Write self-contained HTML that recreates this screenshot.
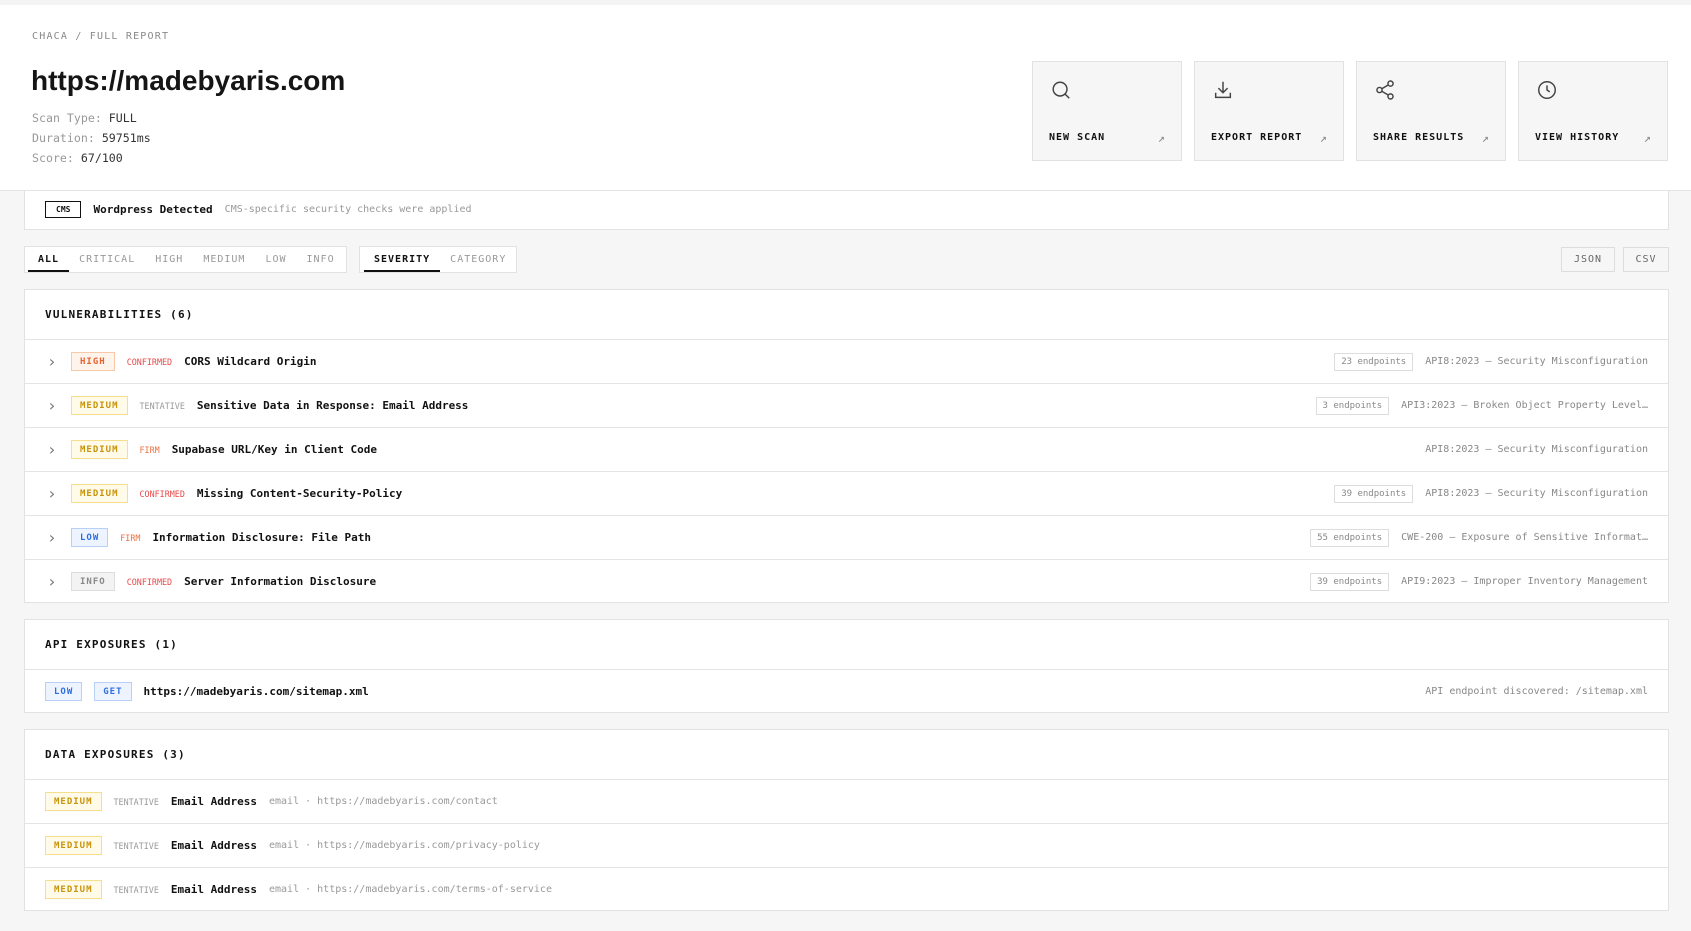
<!DOCTYPE html><html><head><meta charset="utf-8"><style>
*{box-sizing:border-box;margin:0;padding:0}
body{width:1691px;height:931px;background:#f6f6f6;font-family:"DejaVu Sans Mono","Liberation Mono",monospace;color:#111;overflow:hidden;position:relative}
.hdr{position:absolute;top:5px;left:0;width:1691px;height:186px;background:#fff;border-bottom:1px solid #e4e4e4}
.bc{position:absolute;left:32px;top:26px;font-size:10px;letter-spacing:1.2px;color:#888}
h1{position:absolute;left:31px;top:60px;font:bold 28px "Liberation Sans",sans-serif;color:#151515}
.meta{position:absolute;left:32px;top:103px;font-size:11.6px;line-height:20px;color:#999}
.meta b{font-weight:normal;color:#333}
.btn{position:absolute;top:56px;width:150px;height:100px;background:#f6f6f6;border:1px solid #e2e2e2}
.btn svg{position:absolute;left:17px;top:17px}
.btn span{position:absolute;left:16px;top:70px;font-size:10px;font-weight:bold;letter-spacing:1px}
.btn i{position:absolute;right:16px;top:69px;font-style:normal;font-size:12px;color:#888}
.card{position:absolute;left:24px;width:1645px;background:#fff;border:1px solid #e2e2e2}
.cms{top:191px;height:39px;border-top:none}
.tag{display:inline-block;border:1px solid #111;font-size:8px;font-weight:bold;padding:3px 10px}
.row{height:44px;border-top:1px solid #e4e4e4;display:flex;align-items:center;padding:0 20px;position:relative;font-size:11px}
.ch{height:49px;display:flex;align-items:center;padding-left:20px;font-size:11px;font-weight:bold;letter-spacing:1.2px}
.b{display:inline-block;height:19px;line-height:18px;font-size:9px;font-weight:bold;letter-spacing:1px;padding:0 8px;border:1px solid;margin-right:12px}
.hi{color:#e8612c;background:#fff4ec;border-color:#f7c9a8}
.me{color:#c8920a;background:#fffbe8;border-color:#f5df8a}
.lo{color:#2e6ee0;background:#eef4ff;border-color:#b9d0f5}
.in{color:#888;background:#f3f3f3;border-color:#ddd}
.cf{font-size:8.4px;margin-right:12px}
.cfr{color:#e84a4a}.tt{color:#999}.fm{color:#ee7040}
.t{font-weight:bold}
.chev{width:14px;margin-right:10px;margin-left:2px;color:#777;font-size:16px;line-height:16px}
.r{position:absolute;right:20px;display:flex;align-items:center;color:#888;font-size:10px}
.ep{border:1px solid #ddd;font-size:9px;padding:3px 6px;margin-right:12px;color:#888}
.tabs{position:absolute;top:246px;height:27px;background:#fff;border:1px solid #e2e2e2;display:flex;font-size:10px;letter-spacing:1px;color:#999}
.tabs span{padding:0 10px;line-height:24px;height:24px;margin-top:1px}
.tabs .a{color:#111;font-weight:bold;border-bottom:2px solid #111}
.x{position:absolute;top:247px;height:25px;border:1px solid #ddd;font-size:10px;color:#666;letter-spacing:1px;line-height:23px;text-align:center;background:#f6f6f6}
.g{color:#999;margin-left:12px;font-size:10px}
</style></head><body>
<div style="position:absolute;top:0;left:0;width:1691px;height:5px;background:#f4f4f4"></div>
<div class="hdr">
<div class="bc">CHACA / FULL REPORT</div>
<h1>https://madebyaris.com</h1>
<div class="meta">Scan Type: <b>FULL</b><br>Duration: <b>59751ms</b><br>Score: <b>67/100</b></div>
<div class="btn" style="left:1032px"><svg width="22" height="22" viewBox="0 0 24 24" fill="none" stroke="#444" stroke-width="1.6"><circle cx="11" cy="11" r="7.5"/><path d="M16.5 16.5L21 21"/></svg><span>NEW SCAN</span><i>↗</i></div>
<div class="btn" style="left:1194px"><svg width="22" height="22" viewBox="0 0 24 24" fill="none" stroke="#444" stroke-width="1.6"><path d="M12 3v12M7 10l5 5 5-5M4 15v5h16v-5"/></svg><span>EXPORT REPORT</span><i>↗</i></div>
<div class="btn" style="left:1356px"><svg width="22" height="22" viewBox="0 0 24 24" fill="none" stroke="#444" stroke-width="1.6"><circle cx="18" cy="5" r="2.8"/><circle cx="6" cy="12" r="2.8"/><circle cx="18" cy="19" r="2.8"/><path d="M8.5 10.7l7-4.2M8.5 13.3l7 4.2"/></svg><span>SHARE RESULTS</span><i>↗</i></div>
<div class="btn" style="left:1518px"><svg width="22" height="22" viewBox="0 0 24 24" fill="none" stroke="#444" stroke-width="1.6"><circle cx="12" cy="12" r="9"/><path d="M12 7v5l3 2"/></svg><span>VIEW HISTORY</span><i>↗</i></div>
</div>
<div class="card cms"><div style="display:flex;align-items:center;height:36px;padding-left:20px;font-size:11px"><span class="tag">CMS</span><span class="t" style="margin-left:12px">Wordpress Detected</span><span class="g">CMS-specific security checks were applied</span></div></div>
<div class="tabs" style="left:24px;width:323px"><span class="a" style="margin-left:3px">ALL</span><span>CRITICAL</span><span>HIGH</span><span>MEDIUM</span><span>LOW</span><span>INFO</span></div>
<div class="tabs" style="left:359px;width:158px"><span class="a" style="margin-left:4px">SEVERITY</span><span>CATEGORY</span></div>
<div class="x" style="left:1561px;width:54px">JSON</div>
<div class="x" style="left:1623px;width:46px">CSV</div>

<div class="card" style="top:289px;height:314px">
<div class="ch">VULNERABILITIES (6)</div>
<div class="row"><span class="chev">›</span><span class="b hi">HIGH</span><span class="cf cfr">CONFIRMED</span><span class="t">CORS Wildcard Origin</span><div class="r"><span class="ep">23 endpoints</span>API8:2023 – Security Misconfiguration</div></div>
<div class="row"><span class="chev">›</span><span class="b me">MEDIUM</span><span class="cf tt">TENTATIVE</span><span class="t">Sensitive Data in Response: Email Address</span><div class="r"><span class="ep">3 endpoints</span>API3:2023 – Broken Object Property Level…</div></div>
<div class="row"><span class="chev">›</span><span class="b me">MEDIUM</span><span class="cf fm">FIRM</span><span class="t">Supabase URL/Key in Client Code</span><div class="r">API8:2023 – Security Misconfiguration</div></div>
<div class="row"><span class="chev">›</span><span class="b me">MEDIUM</span><span class="cf cfr">CONFIRMED</span><span class="t">Missing Content-Security-Policy</span><div class="r"><span class="ep">39 endpoints</span>API8:2023 – Security Misconfiguration</div></div>
<div class="row"><span class="chev">›</span><span class="b lo">LOW</span><span class="cf fm">FIRM</span><span class="t">Information Disclosure: File Path</span><div class="r"><span class="ep">55 endpoints</span>CWE-200 – Exposure of Sensitive Informat…</div></div>
<div class="row"><span class="chev">›</span><span class="b in">INFO</span><span class="cf cfr">CONFIRMED</span><span class="t">Server Information Disclosure</span><div class="r"><span class="ep">39 endpoints</span>API9:2023 – Improper Inventory Management</div></div>
</div>

<div class="card" style="top:619px;height:94px">
<div class="ch">API EXPOSURES (1)</div>
<div class="row"><span class="b lo">LOW</span><span class="b lo">GET</span><span class="t">https://madebyaris.com/sitemap.xml</span><div class="r">API endpoint discovered: /sitemap.xml</div></div>
</div>

<div class="card" style="top:729px;height:182px">
<div class="ch">DATA EXPOSURES (3)</div>
<div class="row"><span class="b me">MEDIUM</span><span class="cf tt">TENTATIVE</span><span class="t">Email Address</span><span class="g">email · https://madebyaris.com/contact</span></div>
<div class="row"><span class="b me">MEDIUM</span><span class="cf tt">TENTATIVE</span><span class="t">Email Address</span><span class="g">email · https://madebyaris.com/privacy-policy</span></div>
<div class="row"><span class="b me">MEDIUM</span><span class="cf tt">TENTATIVE</span><span class="t">Email Address</span><span class="g">email · https://madebyaris.com/terms-of-service</span></div>
</div>
</body></html>
